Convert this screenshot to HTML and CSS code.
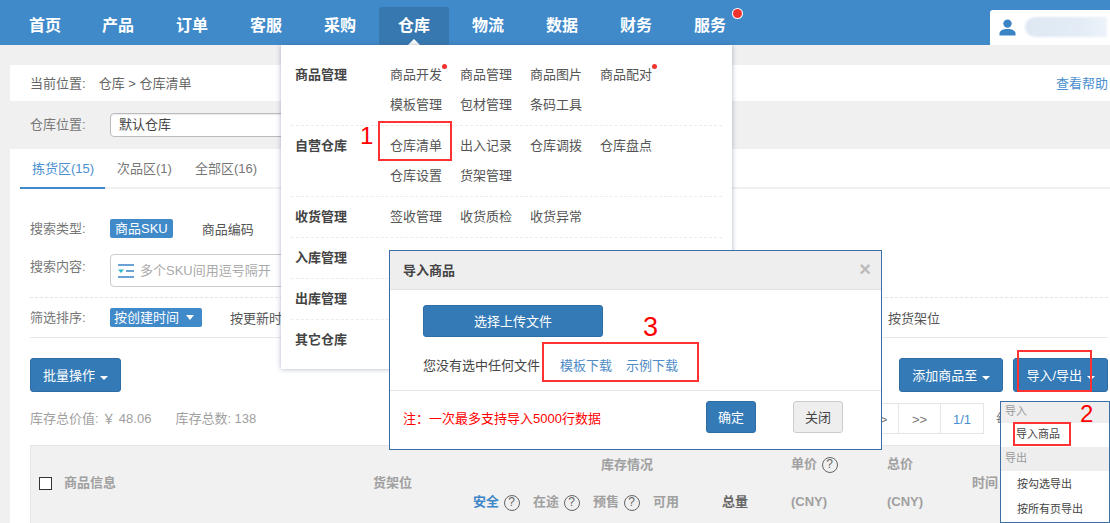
FILE: index.html
```html
<!DOCTYPE html>
<html lang="zh-CN">
<head>
<meta charset="utf-8">
<title>仓库清单</title>
<link rel="stylesheet" href="styles.css">
</head>
<body>
<div class="page">
  <header class="topbar">
    <nav class="nav">
      <a class="nav-item nav-first">首页</a><a class="nav-item">产品</a><a class="nav-item">订单</a><a class="nav-item">客服</a><a class="nav-item">采购</a><a class="nav-item active">仓库</a><a class="nav-item">物流</a><a class="nav-item">数据</a><a class="nav-item">财务</a><a class="nav-item has-dot">服务</a>
    </nav>
    <div class="user">
      <svg class="user-icon" width="17" height="17" viewBox="0 0 17 17"><circle cx="8.5" cy="4.6" r="4.2" fill="#3a84c6"/><path d="M0.5 16.5v-2.2c0-2.8 4-4.3 8-4.3s8 1.5 8 4.3v2.2z" fill="#3a84c6"/></svg>
      <span class="user-blur"></span>
    </div>
  </header>

  <main class="content">
    <div class="crumb">
      <span class="crumb-label">当前位置:</span><span>仓库 &gt; 仓库清单</span>
      <a class="help">查看帮助</a>
    </div>
    <div class="location">
      <span class="field-label">仓库位置:</span>
      <div class="select">默认仓库</div>
    </div>
    <section class="panel">
      <div class="tabs">
        <a class="tab on">拣货区(15)</a><a class="tab">次品区(1)</a><a class="tab tab-last">全部区(16)</a>
      </div>
      <div class="filter-row type-row">
        <span class="field-label">搜索类型:</span>
        <span class="tag">商品SKU</span>
        <span class="opt">商品编码</span>
      </div>
      <div class="filter-row content-row">
        <span class="field-label">搜索内容:</span>
        <div class="search">
          <svg class="search-icon" width="16" height="14" viewBox="0 0 16 14"><path d="M0 1h16M8 7h8M0 13h16" stroke="#3a84c6" stroke-width="1.4" fill="none"/><path d="M0 5.5h6L3 9z" fill="#25b9c4"/></svg>
          <span>多个SKU间用逗号隔开</span>
        </div>
      </div>
      <div class="filter-row sort-row">
        <span class="field-label">筛选排序:</span>
        <span class="tag tag-sort">按创建时间<i class="caret"></i></span>
        <span class="opt first-sort">按更新时间</span>
        <span class="opt last-sort">按货架位</span>
      </div>
      <div class="actions">
        <button class="btn">批量操作<i class="caret"></i></button>
        <div class="actions-right">
          <button class="btn">添加商品至<i class="caret"></i></button>
          <button class="btn">导入/导出<i class="caret"></i></button>
        </div>
      </div>
      <div class="stats">
        <span>库存总价值: ￥ 48.06</span><span class="stats-second">库存总数: 138</span>
        <div class="pager">
          <span class="page-cell wide">&gt;</span><span class="page-cell mid">&gt;&gt;</span><span class="page-cell mid current">1/1</span><span class="page-text">每</span>
        </div>
      </div>
      <div class="thead">
        <div class="col-check"><span class="checkbox"></span></div>
        <div class="col-info">商品信息</div>
        <div class="col-shelf">货架位</div>
        <div class="col-stock">
          <div class="stock-title">库存情况</div>
          <div class="stock-subs">
            <span class="sub safe">安全 <i class="q">?</i></span>
            <span class="sub">在途 <i class="q">?</i></span>
            <span class="sub">预售 <i class="q">?</i></span>
            <span class="sub avail">可用</span>
            <span class="sub total">总量</span>
          </div>
        </div>
        <div class="col-price">
          <div>单价 <i class="q">?</i></div>
          <div class="unit">(CNY)</div>
        </div>
        <div class="col-sum">
          <div>总价</div>
          <div class="unit">(CNY)</div>
        </div>
        <div class="col-time">时间</div>
      </div>
    </section>
  </main>

  <div class="mega">
    <div class="mega-group">
      <div class="mega-label">商品管理</div>
      <div class="mega-items">
        <a class="has-mini">商品开发</a><a>商品管理</a><a>商品图片</a><a class="has-mini">商品配对</a><a>模板管理</a><a>包材管理</a><a>条码工具</a>
      </div>
    </div>
    <div class="mega-group">
      <div class="mega-label">自营仓库</div>
      <div class="mega-items">
        <a>仓库清单</a><a>出入记录</a><a>仓库调拨</a><a>仓库盘点</a><a>仓库设置</a><a>货架管理</a>
      </div>
    </div>
    <div class="mega-group">
      <div class="mega-label">收货管理</div>
      <div class="mega-items"><a>签收管理</a><a>收货质检</a><a>收货异常</a></div>
    </div>
    <div class="mega-group"><div class="mega-label">入库管理</div></div>
    <div class="mega-group"><div class="mega-label">出库管理</div></div>
    <div class="mega-group"><div class="mega-label">其它仓库</div></div>
  </div>

  <div class="modal">
    <div class="modal-head"><span>导入商品</span><span class="modal-x">×</span></div>
    <div class="modal-body">
      <button class="btn upload">选择上传文件</button>
      <div class="file-row">
        <span>您没有选中任何文件</span><a class="dl first">模板下载</a><a class="dl">示例下载</a>
      </div>
    </div>
    <div class="modal-foot">
      <span class="note">注：一次最多支持导入5000行数据</span>
      <button class="btn ok">确定</button>
      <button class="btn close">关闭</button>
    </div>
  </div>

  <div class="dropdown">
    <div class="dd-head">导入</div>
    <a class="dd-item first">导入商品</a>
    <div class="dd-head second">导出</div>
    <a class="dd-item">按勾选导出</a>
    <a class="dd-item">按所有页导出</a>
  </div>

  <span class="mark m1"></span>
  <span class="mark m2"></span>
  <span class="mark m3"></span>
  <span class="mark m4"></span>
  <span class="num n1">1</span>
  <span class="num n2">2</span>
  <span class="num n3">3</span>
</div>
</body>
</html>
```
FILE: styles.css
```css
* { box-sizing: border-box; }
html, body { margin: 0; padding: 0; }
body { font-family: "Liberation Sans", "Noto Sans CJK SC", sans-serif; font-size: 13px; color: #555; background: #f0f0f0; }
a { color: inherit; text-decoration: none; }
i { font-style: normal; }
.page { position: relative; width: 1110px; height: 523px; overflow: hidden; background: #f0f0f0; }

.topbar { height: 45px; background: #408aca; display: flex; justify-content: space-between; align-items: flex-end; }
.nav { display: flex; padding-left: 7px; height: 45px; }
.nav-item { width: 74px; padding-top: 14px; text-align: center; font-size: 16px; line-height: 23px; font-weight: 700; color: #fff; position: relative; }
.nav-first { padding-left: 2px; }
.nav-item.active { background: #3778b0; margin: 7px 2px 0; width: 70px; padding-top: 7px; border-radius: 3px 3px 0 0; }
.nav-item.active::after { content: ""; position: absolute; left: 29px; bottom: 0; border: 6px solid transparent; border-top: 0; border-bottom: 6px solid #fff; }
.nav-item.has-dot::after { content: ""; position: absolute; left: 60px; top: 9px; width: 9px; height: 9px; border-radius: 50%; background: #f0322d; box-shadow: 0 0 0 1px #fff; }
.user { width: 120px; height: 35px; background: #fff; border-radius: 3px 0 0 0; display: flex; align-items: center; padding-left: 9px; gap: 9px; }
.user-blur { width: 82px; height: 20px; border-radius: 10px 0 0 10px; background: linear-gradient(90deg, #dee8f3, #e4edf6 70%, #edf3fa); margin-top: -1px; filter: blur(1px); }

.content { padding: 20px 0 0 10px; }
.crumb { height: 36px; background: #fff; padding: 0 2px 1px 20px; display: flex; align-items: center; color: #666; }
.crumb-label { margin-right: 13px; }
.help { margin-left: auto; color: #4a8fd0; }
.location { height: 48px; display: flex; align-items: center; padding-left: 20px; }
.location .field-label { margin-top: -3px; }
.field-label { width: 80px; color: #777; flex: none; }
.select { width: 220px; height: 24px; border: 1px solid #bbb; border-radius: 4px; background: #fff; padding-left: 8px; line-height: 21px; color: #444; box-shadow: inset 0 1px 1px rgba(0,0,0,.08); }

.panel { background: #fff; height: 374px; padding: 0 2px 0 20px; }
.tabs { height: 40px; margin-left: -10px; margin-right: -2px; border-bottom: 2px solid #f0f0f0; display: flex; }
.tab { padding: 10px 12px 0; line-height: 20px; height: 40px; color: #777; }
.tab.on { color: #4a8fd0; border-bottom: 2px solid #408aca; width: 85px; padding-right: 0; }
.tab-last { margin-left: -1px; }
.filter-row { display: flex; align-items: center; }
.type-row { margin-top: 30px; height: 19px; }
.type-row .field-label, .sort-row .field-label { margin-top: -3px; }
.content-row { margin-top: 16px; height: 33px; align-items: flex-start; line-height: 25px; }
.tag { height: 19px; line-height: 19px; padding: 0 5px 1px; background: #408aca; color: #fff; border-radius: 2px; display: inline-flex; align-items: center; }
.tag-sort { width: 92px; padding-left: 4px; }
.opt { color: #555; }
.type-row .opt { margin-left: 29px; }
.search { width: 300px; height: 33px; border: 1px solid #ccc; border-radius: 4px; background: #fff; display: flex; align-items: center; padding-left: 7px; gap: 6px; color: #aaa; }
.search-icon { flex: none; }
.sort-row { margin-top: 21px; height: 19px; position: relative; }
.sort-row::before { content: ""; position: absolute; left: 0; right: 0; top: -11px; border-top: 1px dashed #e4e4e4; }
.sort-row::after { content: ""; position: absolute; left: 0; right: 0; top: 29px; border-top: 1px solid #e8e8e8; }
.first-sort { margin-left: 28px; }
.last-sort { margin-left: auto; margin-right: 168px; }
.caret { display: inline-block; margin-left: 5px; border: 4px solid transparent; border-top: 4px solid currentColor; border-bottom: 0; }
.tag .caret { border-top-width: 5px; margin-left: 7px; }

.btn { font: inherit; color: #fff; background: #337ab7; border: 1px solid #2e6da4; border-radius: 3px; height: 34px; padding: 0 12px 2px; }
.actions { display: flex; justify-content: space-between; margin-top: 31px; }
.actions-right { display: flex; gap: 10px; }
.stats { display: flex; align-items: flex-start; margin-top: 10px; height: 43px; color: #a0a0a0; line-height: 34px; }
.stats-second { margin-left: 24px; }
.pager { margin-left: auto; margin-top: 1px; display: flex; height: 31px; line-height: 31px; color: #777; }
.page-cell { text-align: center; border: 1px solid #e6e6e6; margin-left: -1px; }
.page-cell.wide { width: 31px; }
.page-cell.mid { width: 43px; }
.page-cell.current { width: 44px; color: #4a8fd0; }
.page-text { width: 4px; overflow: hidden; margin: 0 108px 0 12px; }

.thead { height: 90px; background: #f1f1f1; border: 1px solid #e6e6e6; margin-right: -2px; display: flex; align-items: flex-start; color: #a0a0a0; font-weight: 700; line-height: 20px; }
.col-check { width: 33px; padding: 31px 0 0 8px; }
.checkbox { display: block; width: 13px; height: 13px; border: 1px solid #333; background: #fff; }
.col-info { width: 309px; padding-top: 27px; }
.col-shelf { width: 100px; padding-top: 27px; }
.col-stock { width: 318px; padding-top: 9px; }
.stock-title { padding-left: 128px; }
.stock-subs { display: flex; margin-top: 17px; }
.sub { width: 60px; flex: none; }
.safe { color: #3f86c8; }
.avail { width: 69px; }
.total { color: #666; }
.col-price { width: 96px; padding-top: 8px; }
.col-sum { width: 85px; padding-top: 8px; }
.unit { margin-top: 18px; }
.col-time { padding-top: 27px; }
.q { display: inline-block; width: 16px; height: 16px; margin-left: 1px; border: 1.5px solid #666; border-radius: 50%; font-size: 12px; line-height: 13px; text-align: center; color: #666; font-weight: 400; vertical-align: 0; }

.mega { position: absolute; left: 281px; top: 45px; width: 451px; height: 324px; background: #fff; padding: 10px 10px 0; box-shadow: 0 0 5px rgba(70,90,130,.45); }
.mega-group { display: flex; padding: 5px 0 5px 4px; border-bottom: 1px dashed #ececec; min-height: 41px; }
.mega-group:last-child { border-bottom: 0; }
.mega-label { width: 95px; flex: none; line-height: 30px; font-weight: 700; color: #444; }
.mega-items { display: flex; flex-wrap: wrap; width: 290px; }
.mega-items a { width: 70px; height: 30px; line-height: 30px; color: #555; position: relative; }
.has-mini::after { content: ""; position: absolute; left: 52px; top: 4px; width: 5px; height: 5px; border-radius: 50%; background: #f0322d; }

.modal { position: absolute; left: 389px; top: 250px; width: 493px; height: 200px; background: #fff; border: 1px solid #3a6ea5; display: flex; flex-direction: column; }
.modal-head { height: 39px; background: #eee; border-bottom: 1px solid #e2e2e2; display: flex; justify-content: space-between; align-items: center; padding: 0 10px 2px 13px; font-weight: 700; color: #444; }
.modal-x { font-size: 20px; color: #bbb; font-weight: 700; }
.modal-body { height: 101px; padding: 15px 0 0 33px; border-bottom: 1px solid #e5e5e5; }
.upload { width: 180px; height: 32px; display: block; font-size: 13px; }
.file-row { margin-top: 20px; line-height: 18px; color: #444; display: flex; }
.dl { color: #4f8bc6; margin-left: 14px; }
.dl.first { margin-left: 20px; }
.modal-foot { flex: 1; display: flex; align-items: center; padding: 0 38px 6px 13px; }
.note { color: #f00; margin-right: auto; }
.ok { width: 50px; height: 32px; padding: 0 0 2px; }
.close { width: 50px; height: 32px; padding: 0 0 2px; margin-left: 37px; background: #eee; border-color: #ccc; color: #444; }

.dropdown { position: absolute; left: 1000px; top: 401px; width: 110px; height: 122px; background: #fff; border: 1px solid #3a6ea5; font-size: 11px; }
.dd-head { height: 21px; line-height: 19px; background: #eee; color: #999; padding-left: 4px; }
.dd-head.second { height: 24px; line-height: 22px; }
.dd-item { display: block; height: 25px; line-height: 25px; padding-left: 16px; color: #444; }
.dd-item.first { height: 24px; line-height: 23px; padding-left: 15px; }
.dd-head.second + .dd-item { margin-top: 1px; }

.mark { position: absolute; border: 2px solid #f33; }
.m1 { left: 378px; top: 121px; width: 74px; height: 40px; }
.m2 { left: 1017px; top: 350px; width: 75px; height: 42px; }
.m3 { left: 542px; top: 342px; width: 157px; height: 40px; }
.m4 { left: 1013px; top: 422px; width: 58px; height: 24px; }
.num { position: absolute; color: #f00; font-family: "Liberation Sans", sans-serif; font-size: 24px; line-height: 18px; }
.n1 { left: 360px; top: 127px; }
.n2 { left: 1080px; top: 405px; }
.n3 { left: 643px; top: 318px; font-size: 27px; }
```
